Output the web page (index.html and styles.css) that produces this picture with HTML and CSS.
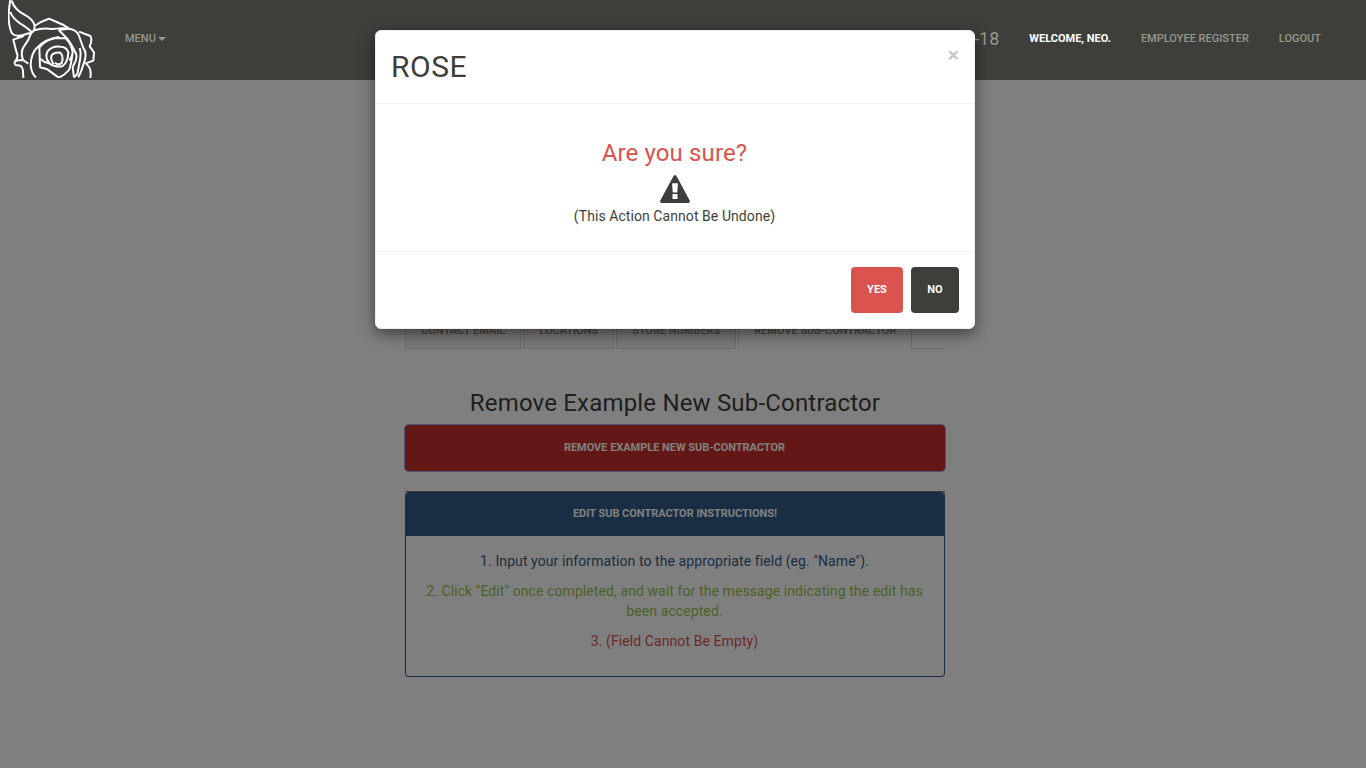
FILE: index.html
```html
<!DOCTYPE html>
<html lang="en">
<head>
<meta charset="utf-8">
<title>Rose</title>
<link rel="stylesheet" href="styles.css">
</head>
<body>
<nav class="navbar">
  <svg class="logo" viewBox="24 0 264 234" aria-hidden="true">
    <path d="M31 0C28 18 25 42 26 57Q28 86 36 100Q47 112 70 105Q80 101 95 98Q107 90 103 75Q99 57 72 43Q44 30 35 2M31 36Q37 54 60 70Q86 86 97 98M103 78L123 66L147 56L170 66L191 75L204 84M103 91Q127 83 155 87Q187 84 207 83M94 98Q86 122 70 142Q61 158 69 180L85 191M71 108L40 119Q45 140 50 158Q57 172 45 184Q42 194 48 196Q67 193 69 212L70 234M45 184L55 181L70 180"/>
    <path transform="translate(90 60)" d="M88 51Q48 56 22 82Q3 100 2 135Q4 160 18 172M28 80L30 142L52 148L86 173Q105 165 117 150Q124 132 127 104M30 81Q45 60 78 54L107 55Q125 72 128 98Q127 112 118 121M30 116Q44 128 57 130Q80 144 98 138Q114 128 115 97Q109 80 92 80Q65 77 52 95Q44 115 58 129M71 132Q58 115 67 103Q78 95 91 98Q102 110 95 129Q85 137 75 128M86 30L112 56Q129 80 138 101Q143 117 131 135L128 142L132 172M86 30L118 26Q140 30 146 45L160 84Q171 97 164 122L153 155L145 172M149 84Q155 102 148 130L142 162L132 172M147 35L181 48Q188 58 179 79L192 97L190 122L165 131M169 132Q186 145 181 174"/>
  </svg>
  <a class="menu">Menu<span class="caret"></span></a>
  <div class="nav-right">
    <span class="date">-18</span>
    <a class="welcome">Welcome, Neo.</a>
    <a>Employee Register</a>
    <a>Logout</a>
  </div>
</nav>
<main class="content">
  <ul class="tabs">
    <li class="tab">Contact Email</li>
    <li class="tab">Locations</li>
    <li class="tab">Store Numbers</li>
    <li class="tab active">Remove Sub-Contractor</li>
  </ul>
  <h3 class="title">Remove Example New Sub-Contractor</h3>
  <button class="remove">Remove Example New Sub-Contractor</button>
  <section class="instructions">
    <div class="panel">
      <div class="panel-head">Edit Sub Contractor Instructions!</div>
      <div class="panel-body">
        <p class="info">1. Input your information to the appropriate field (eg. "Name").</p>
        <p class="success">2. Click "Edit" once completed, and wait for the message indicating the edit has been accepted.</p>
        <p class="danger">3. (Field Cannot Be Empty)</p>
      </div>
    </div>
  </section>
</main>
<div class="backdrop"></div>
<div class="modal" role="dialog">
  <header class="modal-head">
    <h2>ROSE</h2>
    <span class="close">×</span>
  </header>
  <div class="modal-body">
    <h3 class="question">Are you sure?</h3>
    <svg class="warning" viewBox="0 0 30 28" aria-hidden="true"><path fill-rule="evenodd" d="M13.5 1Q15 -.8 16.5 1L29.7 25.5Q30.3 27.8 28.5 28H1.5Q-.3 27.8.3 25.5ZM12.2 8.2V11L12.8 17.5H17.2L17.8 11V8.2ZM12.5 19V24H17.5V19Z"/></svg>
    <p class="note">(This Action Cannot Be Undone)</p>
  </div>
  <footer class="modal-foot">
    <button class="btn yes">Yes</button>
    <button class="btn no">No</button>
  </footer>
</div>
</body>
</html>
```
FILE: styles.css
```css
* { box-sizing: border-box; }
body { margin: 0; height: 768px; overflow: hidden; background: #fff; color: #3e3f3a; font: 14px/20px Roboto, sans-serif; }
h2, h3, p, ul { margin: 0; padding: 0; font-weight: 400; }
button { font-family: inherit; }
.navbar { position: relative; z-index: 2; height: 80px; display: flex; align-items: flex-start; padding-left: 8px; background: #3e3f3a; color: #98978b; font-size: 11px; font-weight: 500; text-transform: uppercase; }
.logo { width: 88px; height: 78px; fill: none; stroke: #fff; stroke-width: 6; stroke-linejoin: round; }
.menu { margin: 29px 0 0 29px; display: flex; align-items: center; }
.caret { margin: 0 0 0 2px; border: 4px solid transparent; border-top-color: #98978b; border-bottom: 0; }
.nav-right { margin: 29px 45px 0 auto; display: flex; gap: 30px; }
.date { font-size: 18px; font-weight: 400; }
.welcome { color: #fff; font-weight: 700; }
.content { width: 540px; margin: 223px 0 0 405px; }
.tabs { display: flex; gap: 2px; height: 46px; list-style: none; }
.tabs::after { content: ""; flex: 1; margin-left: -3px; border-bottom: 1px solid #dfd7ca; }
.tab { padding: 16px 15px 0; border: 1px solid #dfd7ca; background: #f8f5f0; color: #8e8c84; font-size: 11px; line-height: 22px; font-weight: 500; text-transform: uppercase; white-space: nowrap; }
.tab:nth-child(-n+3) { box-shadow: 2px 0 #fff, 2px 1px 0 -1px #dfd7ca; }
.tab.active { background: #fff; border-bottom-color: transparent; }
.title { margin-top: 41px; font-size: 24px; line-height: 26px; letter-spacing: .18px; text-align: center; white-space: nowrap; }
.remove { display: block; width: 540px; height: 46px; margin-top: 9px; padding: 0 1px 2px 0; border: 0; border-radius: 4px; background: #c9302c; color: #fff; font-size: 11px; font-weight: 700; letter-spacing: -.03px; text-transform: uppercase; box-shadow: 0 0 0 1px #8faae4; }
.instructions { margin-top: 20px; border-top: 1px solid #777; }
.panel { height: 185px; border: 1px solid #325d88; border-top: 0; border-radius: 4px; overflow: hidden; text-align: center; }
.panel-head { height: 44px; background: #325d88; color: #fff; font-size: 11px; line-height: 43px; font-weight: 700; letter-spacing: -.03px; text-transform: uppercase; }
.panel-body { padding: 15px 16px 15px 15px; letter-spacing: .09px; }
.panel-body p { margin-bottom: 10px; }
.info { color: #325d88; }
.success { color: #93c54b; }
.danger { color: #d9534f; }
.backdrop { position: absolute; inset: 0; z-index: 1; background: rgba(0,0,0,.5); }
.modal { position: absolute; z-index: 3; left: 375px; top: 30px; width: 600px; height: 299px; border: 1px solid #eee; border-radius: 6px; background: #fff; box-shadow: 0 5px 15px rgba(0,0,0,.5); }
.modal-head { display: flex; justify-content: space-between; height: 73px; padding: 19px 15px 0; border-bottom: 1px solid #f0f0ee; }
.modal-head h2 { font-size: 30px; line-height: 33px; letter-spacing: .5px; }
.close { color: #c8c8c8; font-size: 21px; line-height: 10px; font-weight: 700; }
.modal-body { height: 148px; padding: 36px 1px 0 0; border-bottom: 1px solid #f0f0ee; text-align: center; }
.question { color: #d9534f; font-size: 24px; line-height: 26px; letter-spacing: .12px; }
.note { letter-spacing: .07px; }
.warning { display: block; width: 30px; height: 28px; margin: 9px auto 3px; fill: #3e3f3a; }
.modal-foot { display: flex; justify-content: flex-end; gap: 8px; padding: 15px; }
.btn { height: 46px; padding: 0 0 2px; border: 0; border-radius: 4px; color: #fff; font-size: 11px; font-weight: 700; text-transform: uppercase; }
.yes { width: 52px; background: #d9534f; }
.no { width: 48px; background: #3e3f3a; }
```
